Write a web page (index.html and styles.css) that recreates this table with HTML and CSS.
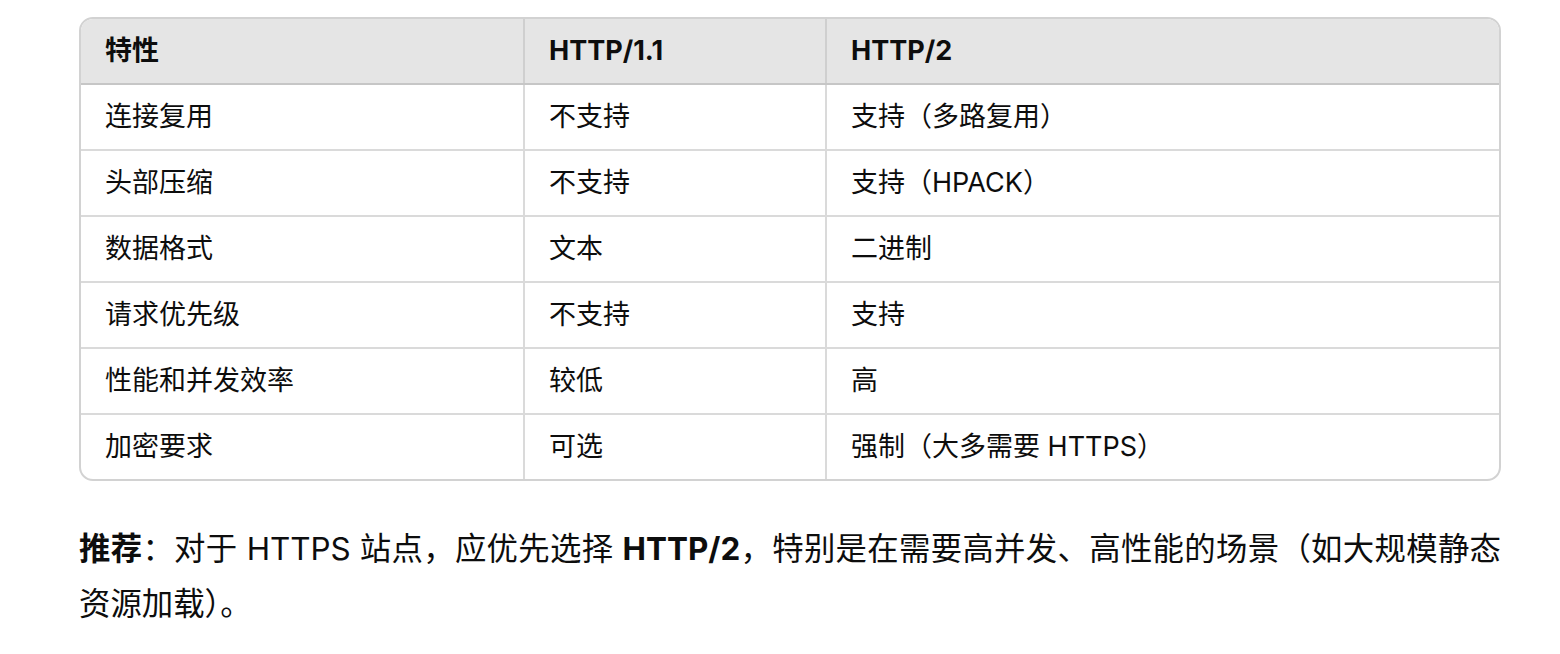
FILE: index.html
```html
<!DOCTYPE html>
<html lang="zh-CN">
<head>
<meta charset="utf-8">
<link rel="stylesheet" href="styles.css">
</head>
<body>
<div class="content">
  <div class="table-wrap">
    <table class="cmp">
      <colgroup>
        <col class="c1"><col class="c2"><col class="c3">
      </colgroup>
      <thead>
        <tr><th>特性</th><th>HTTP/1.1</th><th>HTTP/2</th></tr>
      </thead>
      <tbody>
        <tr><td>连接复用</td><td>不支持</td><td>支持（多路复用）</td></tr>
        <tr><td>头部压缩</td><td>不支持</td><td>支持（HPACK）</td></tr>
        <tr><td>数据格式</td><td>文本</td><td>二进制</td></tr>
        <tr><td>请求优先级</td><td>不支持</td><td>支持</td></tr>
        <tr><td>性能和并发效率</td><td>较低</td><td>高</td></tr>
        <tr><td>加密要求</td><td>可选</td><td>强制（大多需要 HTTPS）</td></tr>
      </tbody>
    </table>
  </div>
  <p class="note"><strong>推荐</strong>：对于 HTTPS 站点，应优先选择 <strong>HTTP/2</strong>，特别是在需要高并发、高性能的场景（如大规模静态资源加载）。</p>
</div>
</body>
</html>
```
FILE: styles.css
```css
html, body {
  margin: 0;
  padding: 0;
  background: #ffffff;
}
body {
  font-family: "Inter", "Noto Sans CJK SC", sans-serif;
  color: #0d0d0d;
  font-size: 27px;
}
.content {
  width: 1422px;
  margin-left: 79px;
  padding-top: 17px;
}
.table-wrap {
  border: 2px solid #d2d2d2;
  border-radius: 14px;
  overflow: hidden;
}
.cmp {
  width: 100%;
  border-collapse: collapse;
  table-layout: fixed;
}
.c1 { width: 443px; }
.c2 { width: 302px; }
.c3 { width: auto; }
.cmp th, .cmp td {
  text-align: left;
  padding: 0 0 0 24px;
  height: 64px;
  line-height: 30px;
  vertical-align: middle;
  border-left: 2px solid #dadada;
  border-top: 2px solid #dadada;
}
.cmp th:first-child, .cmp td:first-child {
  border-left: none;
}
.cmp thead th {
  border-top: none;
  background: #e5e5e5;
  font-weight: 700;
  border-bottom: 2px solid #c6c6c6;
  border-left-color: #cfcfcf;
}
.cmp tbody tr:first-child td {
  border-top: none;
}
.note {
  margin: 41px 0 0 0;
  font-size: 31.4px;
  line-height: 55px;
  text-align: justify;
}
.note strong {
  font-weight: 700;
}
```
